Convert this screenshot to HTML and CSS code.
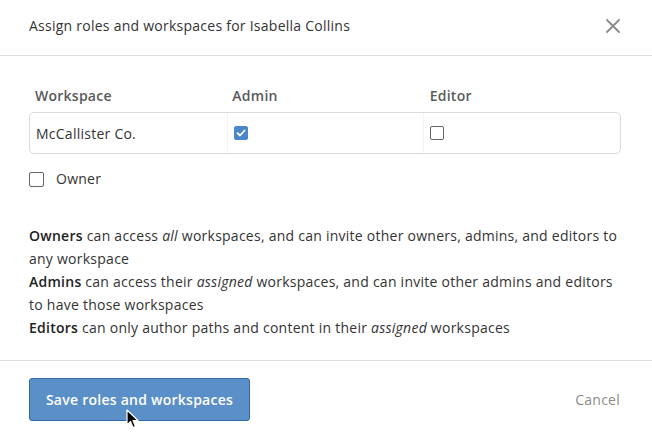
FILE: index.html
```html
<!DOCTYPE html>
<html lang="en">
<head>
    <meta charset="UTF-8">
    <meta name="viewport" content="width=device-width, initial-scale=1.0">
    <title>Assign roles and workspaces</title>
    <link rel="stylesheet" href="styles.css">
</head>
<body>
    <div class="modal">
        <div class="modal-header">
            <h3>Assign roles and workspaces for Isabella Collins</h3>
            <button class="close-btn" aria-label="Close">
                <svg width="14" height="14" viewBox="0 0 14 14">
                    <path d="M1 1 L13 13 M13 1 L1 13" stroke="#8a8a8a" stroke-width="1.8" stroke-linecap="round"/>
                </svg>
            </button>
        </div>

        <div class="modal-body">
            <div class="role-table">
                <div class="role-head">
                    <span>Workspace</span>
                    <span>Admin</span>
                    <span>Editor</span>
                </div>
                <div class="role-row">
                    <div class="cell">McCallister Co.</div>
                    <div class="cell">
                        <span class="check checked">
                            <svg width="10" height="8" viewBox="0 0 10 8">
                                <path d="M1.5 4.2 L4 6.5 L8.5 1.5" fill="none" stroke="#fff" stroke-width="1.8" stroke-linecap="round" stroke-linejoin="round"/>
                            </svg>
                        </span>
                    </div>
                    <div class="cell"><span class="check"></span></div>
                </div>
            </div>

            <label class="owner">
                <span class="check"></span>
                Owner
            </label>

            <!-- role descriptions -->
            <div class="role-info">
                <p><strong>Owners</strong> can access <em>all</em> workspaces, and can invite other owners, admins, and editors to any workspace</p>
                <p><strong>Admins</strong> can access their <em>assigned</em> workspaces, and can invite other admins and editors to have those workspaces</p>
                <p><strong>Editors</strong> can only author paths and content in their <em>assigned</em> workspaces</p>
            </div>
        </div>

        <div class="modal-footer">
            <button class="save-btn">Save roles and workspaces</button>
            <button class="cancel-btn">Cancel</button>
            <svg class="cursor" width="13" height="20" viewBox="0 0 13 20">
                <path d="M1 1 L1 16 L4.5 12.5 L7 18.5 L9.5 17.5 L7 11.5 L12 11.5 Z" fill="#000" stroke="#fff" stroke-width="1.2" stroke-linejoin="round"/>
            </svg>
        </div>
    </div>
</body>
</html>
```

FILE: styles.css
```css
body {
    margin: 0;
    font-family: 'Open Sans', 'Liberation Sans', sans-serif;
    font-size: 14px;
    letter-spacing: 0.25px;
    color: #333;
    background: #fff;
}

.modal {
    width: 652px;
    height: 436px;
    background: #fff;
}

/* Header */
.modal-header {
    height: 56px;
    padding: 0 32px 4px 29px;
    box-sizing: border-box;
    display: flex;
    align-items: center;
    justify-content: space-between;
    border-bottom: 1px solid #dedede;
}

.modal-header h3 {
    margin: 0;
    font-size: 14px;
    font-weight: normal;
    color: #333;
}

.close-btn {
    border: none;
    background: none;
    padding: 0;
    display: flex;
    cursor: pointer;
}

/* Body */
.modal-body {
    padding: 30px 31px 21px 29px;
}

.role-head {
    display: grid;
    grid-template-columns: 1fr 1fr 1fr;
    height: 26px;
    line-height: 20px;
    font-weight: 600;
    color: #5a5a5a;
}

.role-head span {
    padding-left: 6px;
}

.role-row {
    display: grid;
    grid-template-columns: 1fr 1fr 1fr;
    height: 42px;
    box-sizing: border-box;
    border: 1px solid #dcdcdc;
    border-radius: 5px;
}

.role-row .cell {
    display: flex;
    align-items: center;
    padding-left: 6px;
    border-left: 1px solid #f3f3f3;
}

.role-row .cell:first-child {
    border-left: none;
}

.check {
    width: 14px;
    height: 14px;
    box-sizing: border-box;
    border: 1px solid #666;
    border-radius: 2px;
    display: inline-flex;
    align-items: center;
    justify-content: center;
    background: #fff;
}

.check.checked {
    background: #4a86c8;
    border-color: #4a86c8;
}

.owner {
    display: flex;
    align-items: center;
    gap: 12px;
    margin-top: 15px;
    line-height: 20px;
    color: #333;
}

.owner .check {
    width: 15px;
    height: 15px;
}

.role-info {
    margin-top: 35px;
    line-height: 23px;
    color: #333;
}

.role-info p {
    margin: 0;
}

.role-info strong {
    font-weight: 600;
    color: #222;
}

/* Footer */
.modal-footer {
    position: relative;
    border-top: 1px solid #dedede;
    padding: 17px 32px 0 29px;
    display: flex;
    align-items: center;
    justify-content: space-between;
}

.save-btn {
    width: 221px;
    height: 43px;
    font-family: inherit;
    font-size: 14px;
    letter-spacing: inherit;
    font-weight: 600;
    color: #fff;
    background: #5b8fc8;
    border: 1px solid #2f6aa6;
    border-radius: 3px;
    cursor: pointer;
}

.cancel-btn {
    border: none;
    background: none;
    padding: 0;
    font-family: inherit;
    font-size: 14px;
    letter-spacing: inherit;
    color: #8c8c8c;
    cursor: pointer;
}

.cursor {
    position: absolute;
    left: 126px;
    top: 48px;
}
```
